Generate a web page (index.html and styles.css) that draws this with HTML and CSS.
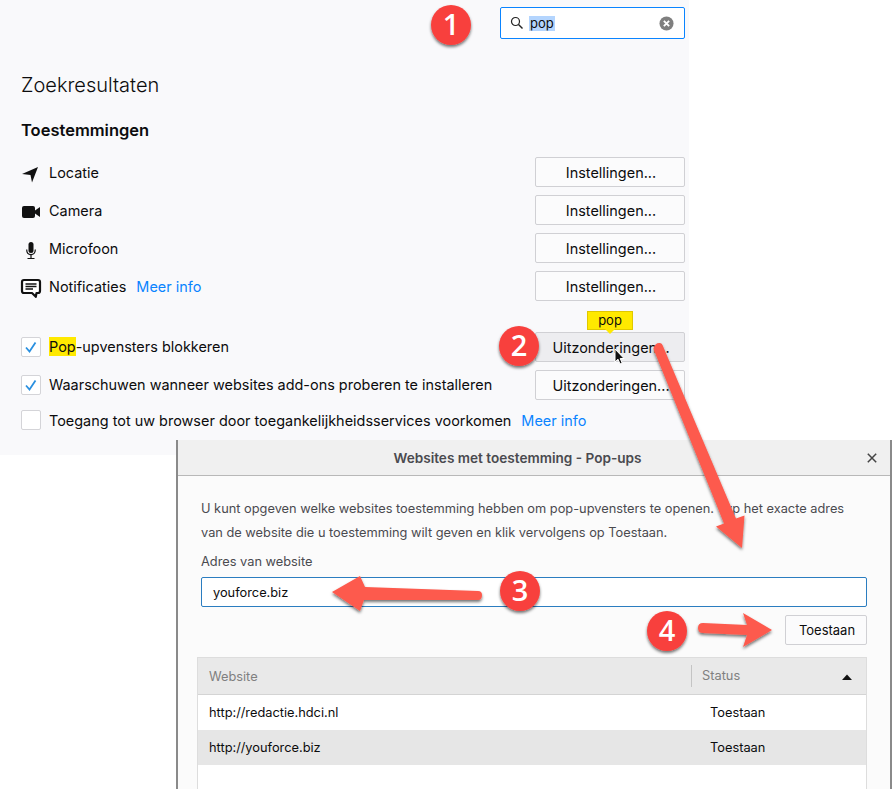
FILE: index.html
```html
<!DOCTYPE html>
<html lang="nl">
<head>
<meta charset="utf-8">
<title>Pop-ups</title>
<link rel="stylesheet" href="styles.css">
</head>
<body>
<main class="settings">
  <div class="search-row">
    <div class="search">
      <svg class="search-icon" viewBox="0 0 14 14" width="14" height="14"><circle cx="5.5" cy="5.5" r="4" fill="none" stroke="#222" stroke-width="1.2"/><path d="M8.5 8.5L12.5 12.5" stroke="#222" stroke-width="1.4" fill="none"/></svg>
      <span class="selected">pop</span>
      <svg class="clear" viewBox="0 0 16 16" width="15" height="15"><circle cx="8" cy="8" r="7.5" fill="#7f7f7f"/><path d="M5.2 5.2L10.8 10.8M10.8 5.2L5.2 10.8" stroke="#fff" stroke-width="2" fill="none"/></svg>
    </div>
  </div>
  <h1>Zoekresultaten</h1>
  <h2>Toestemmingen</h2>
  <div class="perms">
    <div class="row">
      <svg class="icon" viewBox="0 0 20 20" width="20" height="20"><path d="M17 5L1 12L9.5 13L11 20.5Z" fill="#111"/></svg>
      <span class="label">Locatie</span><button class="btn">Instellingen...</button>
    </div>
    <div class="row">
      <svg class="icon" viewBox="0 0 20 20" width="20" height="20"><rect x="1" y="6" width="13" height="12" rx="2" fill="#111"/><path d="M14 10.5L19 7V17L14 13.5Z" fill="#111"/></svg>
      <span class="label">Camera</span><button class="btn">Instellingen...</button>
    </div>
    <div class="row">
      <svg class="icon" viewBox="0 0 20 20" width="20" height="20"><rect x="7.5" y="4" width="5" height="11" rx="2.5" fill="#111"/><path d="M5.7 11.5C5.7 15 7.5 16.6 10 16.6S14.3 15 14.3 11.5M10 16.6V20M6.5 20.5H13.5" fill="none" stroke="#111" stroke-width="1.2"/></svg>
      <span class="label">Microfoon</span><button class="btn">Instellingen...</button>
    </div>
    <div class="row">
      <svg class="icon" viewBox="0 0 20 20" width="20" height="20"><path d="M3 4H17A2 2 0 0 1 19 6V15A2 2 0 0 1 17 17H15.500L14.800 20.800L11 17H3A2 2 0 0 1 1 15V6A2 2 0 0 1 3 4Z" fill="#fff" stroke="#111" stroke-width="2.2" stroke-linejoin="round"/><path d="M4.500 8H15.500M4.500 10.500H15.500M4.500 13H12" stroke="#111" stroke-width="1.300"/></svg>
      <span class="label">Notificaties</span><a class="link">Meer info</a><button class="btn">Instellingen...</button>
    </div>
  </div>
  <div class="checks">
    <div class="row">
      <span class="check"><svg viewBox="0 0 20 20" width="20" height="20"><path d="M5 10.500L8.500 14.500L14.500 5.500" fill="none" stroke="#2a90e0" stroke-width="1.800"/></svg></span>
      <span class="label raised"><mark>Pop</mark>-upvensters blokkeren</span>
      <div class="btn-wrap">
        <button class="btn hover">Uitzonderingen...</button>
        <span class="tip">pop</span>
        <svg class="cursor" viewBox="0 0 12 18" width="12" height="18"><path d="M1 1V14L4 11.200L6 16L8.200 15L6.200 10.500H10Z" fill="#111" stroke="#fff" stroke-width="1"/></svg>
      </div>
    </div>
    <div class="row">
      <span class="check"><svg viewBox="0 0 20 20" width="20" height="20"><path d="M5 10.500L8.500 14.500L14.500 5.500" fill="none" stroke="#2a90e0" stroke-width="1.800"/></svg></span>
      <span class="label raised">Waarschuwen wanneer websites add-ons proberen te installeren</span>
      <button class="btn">Uitzonderingen...</button>
    </div>
    <div class="row short">
      <span class="check"></span>
      <span class="label">Toegang tot uw browser door toegankelijkheidsservices voorkomen</span><a class="link">Meer info</a>
    </div>
  </div>
</main>

<section class="dialog">
  <header class="dialog-head">
    <span class="dialog-title">Websites met toestemming - Pop-ups</span>
    <svg class="close" viewBox="0 0 10 10" width="10" height="10"><path d="M0.800 0.800L9.200 9.200M9.200 0.800L0.800 9.200" stroke="#444" stroke-width="1.500" fill="none"/></svg>
  </header>
  <div class="dialog-body">
    <p class="intro">U kunt opgeven welke websites toestemming hebben om pop-upvensters te openen. Typ het exacte adres<br>van de website die u toestemming wilt geven en klik vervolgens op Toestaan.</p>
    <label class="addr-label">Adres van website</label>
    <div class="addr">youforce.biz</div>
    <div class="add-row"><button class="btn small">Toestaan</button></div>
    <div class="table">
      <div class="thead"><span class="c1">Website</span><span class="c2">Status</span><svg class="sort" viewBox="0 0 10 6" width="10" height="6"><path d="M0 6L5 0.500L10 6Z" fill="#111"/></svg></div>
      <div class="tr"><span class="c1">http://redactie.hdci.nl</span><span class="c2">Toestaan</span></div>
      <div class="tr sel"><span class="c1">http://youforce.biz</span><span class="c2">Toestaan</span></div>
    </div>
  </div>
</section>

<svg class="overlay" viewBox="0 0 893 789" width="893" height="789">
  <defs>
    <filter id="sh" x="-30%" y="-30%" width="160%" height="160%"><feDropShadow dx="0" dy="2" stdDeviation="1.600" flood-color="#000" flood-opacity="0.550"/></filter>
  </defs>
  <g filter="url(#sh)" fill="#fd5a4d">
    <path d="M653.400 348.800Q655 342.500 660 343Q662 343.500 662.600 345.200L736 518.600L744.500 515.500L742 548L716 526.500L724 523.400Z"/>
    <path d="M482 595Q482 591 478 591L365 587L360 576L332 592L360 611L364 600L478 600Q482 600 482 595Z"/>
    <path d="M698 628Q698 623 703 623L747 625L743 613L772 630L743 647L747 635L703 633Q698 633 698 628Z"/>
  </g>
  <g filter="url(#sh)">
    <circle cx="451" cy="25" r="20" fill="#f8413d"/>
    <circle cx="519" cy="346" r="20" fill="#f8413d"/>
    <circle cx="520" cy="591" r="20" fill="#f8413d"/>
    <circle cx="667" cy="631" r="20" fill="#f8413d"/>
  </g>
  <g class="nums">
    <text x="451" y="35">1</text>
    <text x="519" y="356">2</text>
    <text x="520" y="601">3</text>
    <text x="667" y="641">4</text>
  </g>
</svg>
</body>
</html>
```
FILE: styles.css
```css
* { box-sizing: border-box; }
html, body { margin: 0; padding: 0; }
body {
  position: relative;
  width: 893px;
  height: 789px;
  overflow: hidden;
  background: #fff;
  font-family: Inter, "Liberation Sans", sans-serif;
  font-size: 14.45px;
  color: #0c0c0d;
}
.settings {
  width: 689px;
  height: 455px;
  padding: 7px 4px 0 21px;
  background: #f9f9fb;
}
.search-row { display: flex; justify-content: flex-end; }
.search {
  width: 185px;
  height: 32px;
  display: flex;
  align-items: center;
  padding: 0 10px 0 9px;
  background: #fff;
  border: 1px solid #0a84ff;
  border-radius: 2px;
  font-size: 13px;
}
.search-icon { margin-right: 5px; }
.selected { background: #b4d5fe; line-height: 15px; padding: 0 1px; }
.clear { margin-left: auto; }
h1 {
  margin: 33px 0 0;
  font-size: 20px;
  line-height: 26px;
  font-weight: 300;
}
h2 {
  margin: 22px 0 0;
  font-size: 16.5px;
  line-height: 20px;
  font-weight: 600;
}
.perms { margin-top: 17px; display: flex; flex-direction: column; gap: 8px; }
.checks { margin-top: 31px; display: flex; flex-direction: column; gap: 8px; }
.row { display: flex; align-items: center; height: 30px; }
.row.short { height: 34px; margin-top: -5px; }
.icon { width: 20px; margin-right: 8px; flex: none; overflow: visible; }
.label { white-space: nowrap; }
.label.raised { margin-top: -2px; }
.link { margin-left: 10px; color: #0a84ff; }
.btn {
  margin-left: auto;
  width: 150px;
  height: 30px;
  padding: 0 0 0 2px;
  background: #fbfbfc;
  border: 1px solid #d0d0d4;
  border-radius: 2px;
  font: inherit;
  color: inherit;
}
.check {
  width: 20px;
  height: 20px;
  margin-right: 8px;
  flex: none;
  background: #fff;
  border: 1px solid #d4d4d8;
  border-radius: 2px;
  display: flex;
  align-items: center;
  justify-content: center;
}
.check svg { flex: none; }
mark { display: inline-block; background: #ffe900; color: inherit; line-height: 19px; }
.btn-wrap { position: relative; margin-left: auto; width: 150px; height: 30px; }
.btn.hover { background: #ededf0; }
.tip {
  position: absolute;
  left: 52px;
  top: -21px;
  width: 46px;
  height: 19px;
  background: #ffe900;
  border: 1px solid #e0c800;
  font-size: 13px;
  line-height: 17px;
  text-align: center;
}
.tip::after {
  content: "";
  position: absolute;
  left: 17px;
  top: 17px;
  border: 5px solid transparent;
  border-top-color: #ffe900;
  border-bottom: 0;
}
.cursor { position: absolute; left: 79px; top: 16px; }
.dialog {
  position: absolute;
  left: 176px;
  top: 440px;
  width: 716px;
  height: 349px;
  background: #fbfbfb;
  border-left: 2px solid #8a8a8a;
  border-right: 2px solid #8a8a8a;
  color: #4a4a4f;
  font-size: 12.8px;
}
.dialog-head {
  position: relative;
  height: 36px;
  display: flex;
  align-items: center;
  justify-content: center;
  background: #f0f0f0;
  border-bottom: 1px solid #b8b8b8;
  padding-right: 33px;
}
.dialog-title { font-weight: 600; font-size: 13.6px; }
.close { position: absolute; right: 13px; top: 13px; }
.dialog-body { padding: 21px 23px 0 23px; }
.intro { margin: 0; line-height: 24px; white-space: nowrap; }
.addr-label { display: block; margin-top: 8px; line-height: 18px; }
.addr {
  margin-top: 6px;
  height: 30px;
  padding-left: 11px;
  line-height: 29px;
  background: #fff;
  border: 1px solid #2b7dc0;
  border-radius: 2px;
  color: #0c0c0d;
}
.add-row { display: flex; justify-content: flex-end; margin-top: 8px; }
.btn.small { width: 82px; color: #0c0c0d; font-size: 13px; }
.table {
  margin: 12px 0 0 -4px;
  background: #fff;
  border: 1px solid #ddd;
  border-bottom: 0;
  height: 140px;
  color: #0c0c0d;
}
.thead, .tr { display: flex; align-items: center; position: relative; }
.thead { height: 37px; background: #e9e9e9; border-bottom: 1px solid #d4d4d4; color: #808080; }
.tr { height: 35px; }
.tr.sel { background: #e6e6e6; }
.c1 { width: 493px; padding-left: 11px; }
.tr .c1 { padding-left: 11px; }
.c2 { padding-left: 10px; }
.tr .c2 { padding-left: 19px; }
.thead .c2 { border-left: 1px solid #c4c4c4; line-height: 22px; }
.sort { position: absolute; right: 14px; top: 16px; }
.overlay { position: absolute; left: 0; top: 0; pointer-events: none; }
.nums text {
  fill: #fff;
  font-family: "Open Sans", "Liberation Sans", sans-serif;
  font-size: 29px;
  font-weight: 600;
  text-anchor: middle;
}
```
